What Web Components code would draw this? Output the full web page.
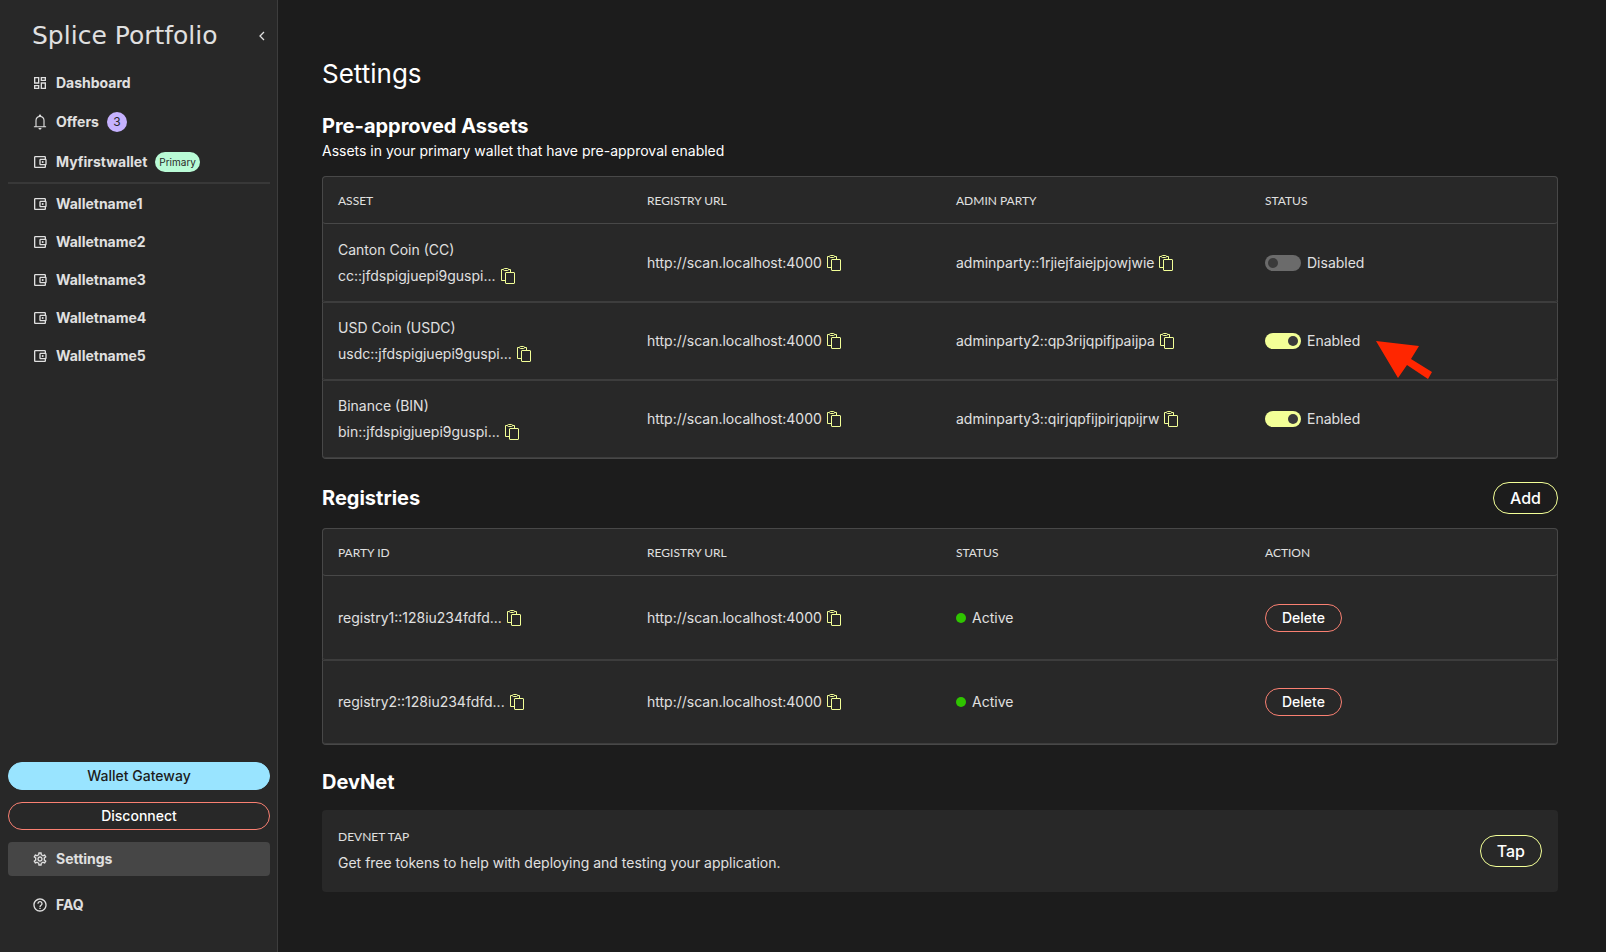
<!DOCTYPE html>
<html lang="en">
<head>
<meta charset="utf-8">
<title>Splice Portfolio - Settings</title>
<style>
  :root {
    --page-bg: #1c1c1c;
    --panel-bg: #282828;
    --line: #3d3d3d;
    --line-strong: #484848;
    --text: #e0e0e0;
    --lime: #f3ff97;
    --coral: #fa8072;
    --sky: #99e4ff;
  }

  body {
    margin: 0;
    background: var(--page-bg);
    color: var(--text);
    font: 400 14px/20px Inter, "Liberation Sans", sans-serif;
  }
</style>
</head>
<body>
<splice-app></splice-app>

<script>
  const ICONS = {
    dashboard: '<svg viewBox="0 0 24 24"><path d="M19 5v2h-4V5h4M9 5v6H5V5h4m10 8v6h-4v-6h4M9 17v2H5v-2h4M21 3h-8v6h8V3zM11 3H3v10h8V3zm10 8h-8v10h8V11zm-10 4H3v6h8v-6z"/></svg>',
    bell: '<svg viewBox="60 -900 840 840"><path d="M160-200v-60h80v-304q0-84 49.500-150.500T420-798v-22q0-25 17.500-42.500T480-880q25 0 42.500 17.500T540-820v22q81 17 130.500 83.500T720-564v304h80v60H160Zm320 120q-33 0-56.500-23.500T400-160h160q0 33-23.500 56.500T480-80ZM300-260h360v-304q0-75-52.500-127.500T480-744q-75 0-127.500 52.500T300-564v304Z"/></svg>',
    wallet: '<svg viewBox="0 0 24 24"><path d="M21 7.280V5c0-1.100-.9-2-2-2H5c-1.110 0-2 .9-2 2v14c0 1.100.89 2 2 2h14c1.100 0 2-.9 2-2v-2.280c.59-.35 1-.98 1-1.720V9c0-.74-.41-1.370-1-1.720zM20 9v6h-7V9h7zM5 19V5h14v2h-6c-1.100 0-2 .9-2 2v6c0 1.100.9 2 2 2h6v2H5z"/><circle cx="16" cy="12" r="1.500"/></svg>',
    gear: '<svg viewBox="0 0 24 24"><path d="M19.430 12.980c.04-.32.07-.64.07-.98 0-.34-.03-.66-.07-.98l2.110-1.650c.19-.15.24-.42.12-.64l-2-3.460c-.09-.16-.26-.25-.44-.25-.06 0-.12.01-.17.03l-2.490 1c-.52-.4-1.080-.73-1.690-.98l-.38-2.650C14.460 2.180 14.250 2 14 2h-4c-.25 0-.46.18-.49.42l-.38 2.650c-.61.25-1.170.59-1.690.98l-2.490-1c-.06-.02-.12-.03-.18-.03-.17 0-.34.09-.43.25l-2 3.460c-.13.22-.07.49.12.64l2.110 1.650c-.04.32-.07.65-.07.98 0 .33.03.66.07.98l-2.110 1.650c-.19.15-.24.42-.12.64l2 3.460c.09.16.26.25.44.25.06 0 .12-.01.17-.03l2.490-1c.52.4 1.080.73 1.690.98l.38 2.650c.03.24.24.42.49.42h4c.25 0 .46-.18.49-.42l.38-2.650c.61-.25 1.170-.59 1.690-.98l2.490 1c.06.02.12.03.18.03.17 0 .34-.09.43-.25l2-3.460c.12-.22.07-.49-.12-.64l-2.110-1.650zm-1.980-1.710c.04.31.05.52.05.73 0 .21-.02.43-.05.73l-.14 1.130.89.7 1.080.84-.7 1.210-1.270-.51-1.040-.42-.9.68c-.43.32-.84.56-1.250.73l-1.060.43-.16 1.130-.2 1.350h-1.400l-.19-1.350-.16-1.130-1.060-.43c-.43-.18-.83-.41-1.230-.71l-.91-.7-1.060.43-1.270.51-.7-1.210 1.080-.84.89-.7-.14-1.130c-.03-.31-.05-.54-.05-.74s.02-.43.05-.73l.14-1.130-.89-.7-1.080-.84.7-1.210 1.270.51 1.040.42.9-.68c.43-.32.84-.56 1.250-.73l1.060-.43.16-1.130.2-1.350h1.390l.19 1.350.16 1.130 1.060.43c.43.18.83.41 1.230.71l.91.7 1.060-.43 1.270-.51.7 1.210-1.070.85-.89.7.14 1.130zM12 8c-2.210 0-4 1.790-4 4s1.790 4 4 4 4-1.790 4-4-1.790-4-4-4zm0 6c-1.100 0-2-.9-2-2s.9-2 2-2 2 .9 2 2-.9 2-2 2z"/></svg>',
    help: '<svg viewBox="0 0 24 24"><path d="M11 18h2v-2h-2v2zm1-16C6.480 2 2 6.480 2 12s4.480 10 10 10 10-4.480 10-10S17.520 2 12 2zm0 18c-4.410 0-8-3.590-8-8s3.590-8 8-8 8 3.590 8 8-3.590 8-8 8zm0-14c-2.210 0-4 1.790-4 4h2c0-1.100.9-2 2-2s2 .9 2 2c0 2-3 1.750-3 5h2c0-2.250 3-2.500 3-5 0-2.210-1.790-4-4-4z"/></svg>'
  };

  const REGISTRY_URL = 'http://scan.localhost:4000';

  const ASSETS = [
    { name: 'Canton Coin (CC)', id: 'cc::jfdspigjuepi9guspi...', admin: 'adminparty::1rjiejfaiejpjowjwie', enabled: false },
    { name: 'USD Coin (USDC)', id: 'usdc::jfdspigjuepi9guspi...', admin: 'adminparty2::qp3rijqpifjpaijpa', enabled: true, pointer: true },
    { name: 'Binance (BIN)', id: 'bin::jfdspigjuepi9guspi...', admin: 'adminparty3::qirjqpfijpirjqpijrw', enabled: true }
  ];

  const REGISTRIES = ['registry1::128iu234fdfd...', 'registry2::128iu234fdfd...'];

  // Shared by the two table components
  const TABLE_CSS = `
    :host { display: block; }
    .frame {
      padding: 1px 0;
      background: var(--panel-bg);
      border-radius: 4px;
      box-shadow: inset 0 0 0 1px var(--line-strong);
    }
    table {
      width: 100%;
      table-layout: fixed;
      border-collapse: separate;
      border-spacing: 0;
    }
    th, td {
      box-sizing: border-box;
      padding: 0 16px;
      text-align: left;
      vertical-align: middle;
      border-bottom: 1px solid var(--line);
    }
    th {
      height: 47px;
      padding-top: 2px;
      border-bottom-color: var(--line-strong);
      font: 400 12px/18px Lato, sans-serif;
      text-transform: uppercase;
    }
    tbody tr + tr td { border-top: 1px solid var(--line); }
    tr > :first-child { border-bottom-left-radius: 4px; }
    tr > :last-child { border-bottom-right-radius: 4px; }
  `;

  class PillButton extends HTMLElement {
    constructor() {
      super();
      this.attachShadow({ mode: 'open' });
      this.shadowRoot.innerHTML = `
        <style>
          :host { display: inline-block; }
          button {
            box-sizing: border-box;
            display: block;
            width: 100%;
            height: 28px;
            padding: 0 16px;
            border: 1px solid var(--coral);
            border-radius: 16px;
            background: transparent;
            color: #fff;
            font: 500 14px/20px Inter, sans-serif;
            cursor: pointer;
          }
          :host([kind="add"]) button {
            height: 32px;
            border-color: var(--lime);
            font-size: 16px;
          }
          :host([kind="primary"]) button {
            border-color: var(--sky);
            background: var(--sky);
            color: #1c1c1c;
          }
        </style>
        <button type="button"><slot></slot></button>
      `;
    }
  }
  customElements.define('pill-button', PillButton);

  class NavItem extends HTMLElement {
    connectedCallback() {
      if (this.shadowRoot) return;
      this.attachShadow({ mode: 'open' });
      this.shadowRoot.innerHTML = `
        <style>
          :host { display: block; }
          a {
            display: flex;
            align-items: center;
            gap: 8px;
            padding: 8px 24px;
            border-radius: 4px;
            color: var(--text);
            font-weight: 700;
            line-height: 18px;
            text-decoration: none;
          }
          :host([active]) a { background: #464646; }
          svg { display: block; width: 16px; height: 16px; fill: currentColor; }
        </style>
        <a href="#">${ICONS[this.getAttribute('icon')]}<slot></slot><slot name="badge"></slot></a>
      `;
    }
  }
  customElements.define('nav-item', NavItem);

  class NavBadge extends HTMLElement {
    constructor() {
      super();
      this.attachShadow({ mode: 'open' });
      this.shadowRoot.innerHTML = `
        <style>
          :host {
            box-sizing: border-box;
            min-width: 20px;
            padding: 0 4px;
            border-radius: 10px;
            background: #c6b2ff;
            color: #282828;
            font-size: 12px;
            font-weight: 400;
            line-height: 20px;
            text-align: center;
          }
          :host([kind="primary"]) {
            background: #b9fbd6;
            font-size: 10px;
          }
        </style>
        <slot></slot>
      `;
    }
  }
  customElements.define('nav-badge', NavBadge);

  class CopyText extends HTMLElement {
    constructor() {
      super();
      this.attachShadow({ mode: 'open' });
      this.shadowRoot.innerHTML = `
        <style>
          :host { display: flex; align-items: center; gap: 5px; }
          button {
            padding: 0;
            border: 0;
            background: none;
            cursor: pointer;
          }
          svg { display: block; width: 14px; height: 16px; fill: none; stroke: var(--lime); }
        </style>
        <slot></slot>
        <button type="button" aria-label="Copy">
          <svg viewBox="0 0 14 16">
            <path d="M4.500 12.500h-4V1.500H2M7.500 1.500h2V4"/>
            <rect x="2.500" y=".5" width="5" height="2" rx="1"/>
            <rect x="4.500" y="4.500" width="9" height="11" rx=".5"/>
          </svg>
        </button>
      `;
      this.shadowRoot.querySelector('button').addEventListener('click', () => {
        if (navigator.clipboard) navigator.clipboard.writeText(this.textContent);
      });
    }
  }
  customElements.define('copy-text', CopyText);

  class StatusToggle extends HTMLElement {
    connectedCallback() {
      if (this.shadowRoot) return;
      this.attachShadow({ mode: 'open' });
      this.shadowRoot.innerHTML = `
        <style>
          :host { display: block; }
          label { display: inline-flex; align-items: center; gap: 6px; cursor: pointer; }
          input {
            appearance: none;
            display: flex;
            box-sizing: border-box;
            width: 36px;
            height: 16px;
            margin: 0;
            padding: 3px;
            border-radius: 8px;
            background: #6b6b6b;
            cursor: pointer;
          }
          input::before {
            content: "";
            width: 10px;
            height: 10px;
            border-radius: 50%;
            background: #3a3a3a;
          }
          input:checked { background: var(--lime); justify-content: flex-end; }
        </style>
        <label><input type="checkbox"><span></span></label>
      `;
      this.input = this.shadowRoot.querySelector('input');
      this.input.checked = this.hasAttribute('checked');
      this.input.addEventListener('change', () => this.update());
      this.update();
    }

    update() {
      this.shadowRoot.querySelector('span').textContent = this.input.checked ? 'Enabled' : 'Disabled';
    }
  }
  customElements.define('status-toggle', StatusToggle);

  class PointerArrow extends HTMLElement {
    constructor() {
      super();
      this.attachShadow({ mode: 'open' });
      this.shadowRoot.innerHTML = `
        <style>
          /* floats over the row, next to the toggle label */
          :host { position: absolute; left: 111px; top: 10px; pointer-events: none; }
          svg { display: block; width: 56px; height: 38px; fill: #ff2600; }
        </style>
        <svg viewBox="0 0 56 38"><path d="M0 0l43 5-8 13 21 13-4 7-21-14-9 13z"/></svg>
      `;
    }
  }
  customElements.define('pointer-arrow', PointerArrow);

  class AssetTable extends HTMLElement {
    constructor() {
      super();
      this.attachShadow({ mode: 'open' });
      const rows = ASSETS.map(asset => `
        <tr>
          <td><div class="name">${asset.name}</div><copy-text>${asset.id}</copy-text></td>
          <td><copy-text>${REGISTRY_URL}</copy-text></td>
          <td><copy-text>${asset.admin}</copy-text></td>
          <td>
            <div class="status">
              <status-toggle ${asset.enabled ? 'checked' : ''}></status-toggle>
              ${asset.pointer ? '<pointer-arrow></pointer-arrow>' : ''}
            </div>
          </td>
        </tr>
      `).join('');
      this.shadowRoot.innerHTML = `
        <style>
          ${TABLE_CSS}
          td { height: 78px; }
          .name { margin-bottom: 6px; }
          .status { position: relative; }
        </style>
        <div class="frame">
          <table>
            <thead><tr><th>Asset</th><th>Registry URL</th><th>Admin Party</th><th>Status</th></tr></thead>
            <tbody>${rows}</tbody>
          </table>
        </div>
      `;
    }
  }
  customElements.define('asset-table', AssetTable);

  class RegistryTable extends HTMLElement {
    constructor() {
      super();
      this.attachShadow({ mode: 'open' });
      const rows = REGISTRIES.map(party => `
        <tr>
          <td><copy-text>${party}</copy-text></td>
          <td><copy-text>${REGISTRY_URL}</copy-text></td>
          <td><span class="active">Active</span></td>
          <td><pill-button>Delete</pill-button></td>
        </tr>
      `).join('');
      this.shadowRoot.innerHTML = `
        <style>
          ${TABLE_CSS}
          td { height: 84px; }
          pill-button { display: block; width: fit-content; }
          .active { display: flex; align-items: center; gap: 6px; }
          .active::before {
            content: "";
            width: 10px;
            height: 10px;
            border-radius: 50%;
            background: #2fc400;
          }
        </style>
        <div class="frame">
          <table>
            <thead><tr><th>Party ID</th><th>Registry URL</th><th>Status</th><th>Action</th></tr></thead>
            <tbody>${rows}</tbody>
          </table>
        </div>
      `;
    }
  }
  customElements.define('registry-table', RegistryTable);

  class SettingsSection extends HTMLElement {
    connectedCallback() {
      if (this.shadowRoot) return;
      this.attachShadow({ mode: 'open' });
      this.shadowRoot.innerHTML = `
        <style>
          :host { display: block; }
          header {
            display: flex;
            align-items: center;
            justify-content: space-between;
            margin-bottom: 14px;
            color: #fff;
          }
          h2 { margin: 0; font-size: 20px; line-height: 28px; font-weight: 700; }
          ::slotted(p) { margin: 0; line-height: 22px; }
        </style>
        <header>
          <div><h2>${this.getAttribute('heading')}</h2><slot name="note"></slot></div>
          <slot name="action"></slot>
        </header>
        <slot></slot>
      `;
    }
  }
  customElements.define('settings-section', SettingsSection);

  class TapCard extends HTMLElement {
    constructor() {
      super();
      this.attachShadow({ mode: 'open' });
      this.shadowRoot.innerHTML = `
        <style>
          :host {
            display: flex;
            align-items: center;
            justify-content: space-between;
            padding: 17px 16px 18px;
            border-radius: 4px;
            background: var(--panel-bg);
          }
          h3 {
            margin: 0 0 5px;
            font: 400 12px/20px Lato, sans-serif;
            text-transform: uppercase;
          }
          p { margin: 0; line-height: 22px; }
        </style>
        <div>
          <h3>DevNet Tap</h3>
          <p>Get free tokens to help with deploying and testing your application.</p>
        </div>
        <pill-button kind="add">Tap</pill-button>
      `;
    }
  }
  customElements.define('tap-card', TapCard);

  class AppSidebar extends HTMLElement {
    constructor() {
      super();
      this.attachShadow({ mode: 'open' });
      const wallets = [1, 2, 3, 4, 5].map(n => `<nav-item icon="wallet">Walletname${n}</nav-item>`).join('');
      this.shadowRoot.innerHTML = `
        <style>
          :host {
            box-sizing: border-box;
            display: flex;
            flex-direction: column;
            width: 278px;
            padding: 20px 7px 30px 8px;
            border-right: 1px solid var(--line);
            background: var(--panel-bg);
          }
          header {
            display: flex;
            align-items: center;
            justify-content: space-between;
            height: 32px;
            margin-bottom: 14px;
            padding: 0 4px 0 24px;
          }
          .brand {
            font: 400 25px/32px "DejaVu Sans", sans-serif;
            white-space: nowrap;
          }
          header button {
            padding: 0;
            border: 0;
            background: none;
            color: inherit;
            cursor: pointer;
          }
          header svg { display: block; width: 8px; height: 10px; fill: none; stroke: currentColor; stroke-width: 1.3; }
          nav { display: flex; flex-direction: column; gap: 4px; }
          hr { width: 100%; height: 2px; margin: 2px 0 3px; border: 0; background: #383838; }
          footer {
            display: flex;
            flex-direction: column;
            gap: 12px;
            margin-top: auto;
          }
        </style>
        <header>
          <span class="brand">Splice Portfolio</span>
          <button type="button" aria-label="Collapse menu">
            <svg viewBox="0 0 8 10"><path d="M6 1L2 5l4 4"/></svg>
          </button>
        </header>
        <nav>
          <nav-item icon="dashboard">Dashboard</nav-item>
          <nav-item icon="bell">Offers<nav-badge slot="badge">3</nav-badge></nav-item>
          <nav-item icon="wallet">Myfirstwallet<nav-badge slot="badge" kind="primary">Primary</nav-badge></nav-item>
        </nav>
        <hr>
        <nav>${wallets}</nav>
        <footer>
          <pill-button kind="primary">Wallet Gateway</pill-button>
          <pill-button>Disconnect</pill-button>
          <nav-item icon="gear" active>Settings</nav-item>
          <nav-item icon="help">FAQ</nav-item>
        </footer>
      `;
    }
  }
  customElements.define('app-sidebar', AppSidebar);

  class SpliceApp extends HTMLElement {
    constructor() {
      super();
      this.attachShadow({ mode: 'open' });
      this.shadowRoot.innerHTML = `
        <style>
          :host { display: flex; min-height: 100vh; }
          app-sidebar { flex: none; }
          main {
            flex: 1;
            display: flex;
            flex-direction: column;
            gap: 23px;
            min-width: 0;
            padding: 58px 48px 30px 44px;
          }
          h1 {
            margin: 0;
            color: #fff;
            font-size: 26px;
            line-height: 31px;
            font-weight: 400;
          }
        </style>
        <app-sidebar></app-sidebar>
        <main>
          <h1>Settings</h1>
          <settings-section heading="Pre-approved Assets">
            <p slot="note">Assets in your primary wallet that have pre-approval enabled</p>
            <asset-table></asset-table>
          </settings-section>
          <settings-section heading="Registries">
            <pill-button slot="action" kind="add">Add</pill-button>
            <registry-table></registry-table>
          </settings-section>
          <settings-section heading="DevNet">
            <tap-card></tap-card>
          </settings-section>
        </main>
      `;
    }
  }
  customElements.define('splice-app', SpliceApp);
</script>
</body>
</html>
